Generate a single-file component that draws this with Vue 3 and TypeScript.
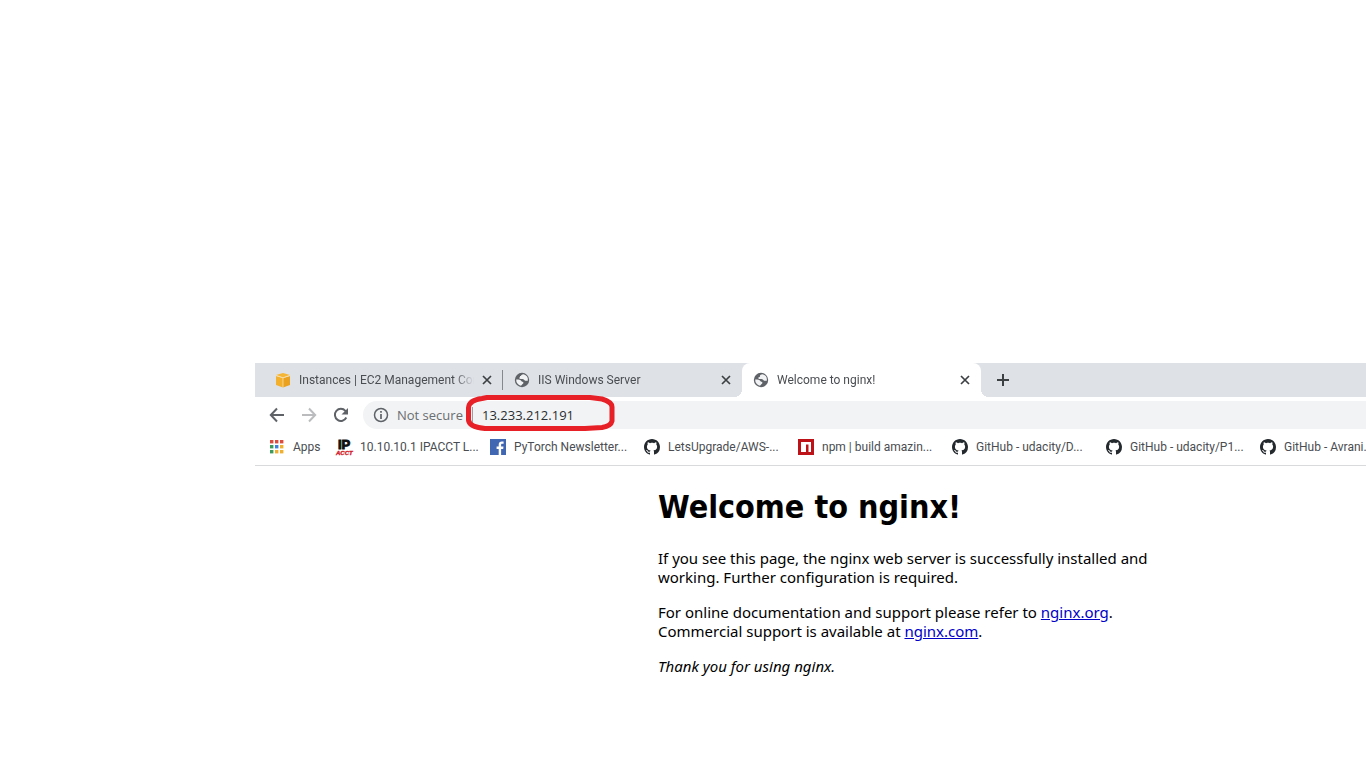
<script setup lang="ts">
import { ref } from 'vue'

interface Tab {
  title: string
  icon: 'aws' | 'globe'
}

interface Bookmark {
  title: string
  icon: 'ip' | 'facebook' | 'github' | 'npm'
}

const tabs: Tab[] = [
  { title: 'Instances | EC2 Management Console', icon: 'aws' },
  { title: 'IIS Windows Server', icon: 'globe' },
  { title: 'Welcome to nginx!', icon: 'globe' },
]
const active = ref(2)
const address = ref('13.233.212.191')

const bookmarks: Bookmark[] = [
  { title: '10.10.10.1 IPACCT L...', icon: 'ip' },
  { title: 'PyTorch Newsletter...', icon: 'facebook' },
  { title: 'LetsUpgrade/AWS-...', icon: 'github' },
  { title: 'npm | build amazin...', icon: 'npm' },
  { title: 'GitHub - udacity/D...', icon: 'github' },
  { title: 'GitHub - udacity/P1...', icon: 'github' },
  { title: 'GitHub - Avrani...', icon: 'github' },
]

const appColors = ['#dd4b3e', '#dd4b3e', '#dd4b3e', '#3d9a5b', '#3f7fd9', '#eeb02e', '#3d9a5b', '#eeb02e', '#eeb02e']
</script>

<template>
  <div class="desktop">
    <div class="browser">
      <div class="tabs">
        <div v-for="(tab, i) in tabs" :key="i" class="tab" :class="{ active: i === active, divided: i + 1 < active }">
          <button class="tab-name" type="button" @click="active = i">
            <svg v-if="tab.icon === 'aws'" class="icon" viewBox="0 0 16 16" aria-hidden="true">
              <path d="M1 4v9l7 2.500V6z" fill="#f2b02d" />
              <path d="M15 4v9l-7 2.500V6z" fill="#e9a11f" />
              <path d="M1 3l7-2 7 2-7 2.500z" fill="#f5b535" />
              <path d="M1 3.500l7 2.300 7-2.300M8 6v9.500" fill="none" stroke="#fbe0a5" stroke-width=".8" />
            </svg>
            <svg v-else class="icon" viewBox="0 0 16 16" aria-hidden="true">
              <circle cx="8" cy="8" r="7.200" fill="#5f6368" />
              <path class="land" d="M9.500 2.300c-1.500.2-2.800.9-2.500 2 .2.700-.9.600-1.500 1.200-.7.700.1 1.500 1.300 1.500 1.600 0 2.900-.1 3.500.9.500.9 1.600 1.200 3.500.8A5.800 5.800 0 0 0 9.500 2.300z" />
              <path class="land" d="M2.200 7.600c1.800-.1 4.600.3 5.100 1.400.4.9 1.800.5 2.100 1.400.4 1-.8 1.200-1.100 1.900-.3.700-.9 1-1.300 1.400A5.800 5.800 0 0 1 2.200 7.600z" />
            </svg>
            <span class="tab-title">{{ tab.title }}</span>
          </button>
          <button class="close" type="button" aria-label="Close tab">
            <svg viewBox="0 0 16 16" aria-hidden="true"><path d="M4 4l8 8M12 4l-8 8" stroke="#3c4043" stroke-width="1.700" /></svg>
          </button>
        </div>
        <button class="new-tab" type="button" aria-label="New tab">
          <svg viewBox="0 0 16 16" aria-hidden="true"><path d="M8 2v12M2 8h12" stroke="#3c4043" stroke-width="2" /></svg>
        </button>
      </div>

      <div class="toolbar">
        <button class="nav" type="button" aria-label="Back">
          <svg viewBox="0 0 16 16" aria-hidden="true"><path d="M15 8H2M8 1.500L1.800 8 8 14.500" fill="none" stroke="#5f6368" stroke-width="2" /></svg>
        </button>
        <button class="nav" type="button" aria-label="Forward">
          <svg viewBox="0 0 16 16" aria-hidden="true"><path d="M1 8h13M8 1.500L14.200 8 8 14.500" fill="none" stroke="#babcbe" stroke-width="2" /></svg>
        </button>
        <button class="nav" type="button" aria-label="Reload">
          <svg viewBox="0 0 16 16" aria-hidden="true">
            <path d="M13.300 10.500A6 6 0 1 1 12.400 3.900L14 5.500" fill="none" stroke="#5f6368" stroke-width="2" />
            <path d="M15 1v6.500H8.500z" fill="#5f6368" />
          </svg>
        </button>
        <div class="omnibox">
          <svg class="icon" viewBox="0 0 16 16" aria-hidden="true">
            <circle cx="8" cy="8" r="6.500" fill="none" stroke="#5f6368" stroke-width="1.500" />
            <path d="M8 7v5M8 4v1.700" stroke="#5f6368" stroke-width="1.700" />
          </svg>
          <label class="secure" for="address">Not secure</label>
          <div class="field">
            <input id="address" v-model="address" type="text" spellcheck="false" />
            <svg class="marker" viewBox="0 0 150 38" aria-hidden="true">
              <path d="M17 4.500L22 3.500H125L137 5Q147 8 147 13V27Q146 32 137 33.500L120 34.500H20Q4 33 3.500 26V14Q4 6 17 4.500z" fill="none" stroke="#e71f26" stroke-width="5" stroke-linejoin="round" />
            </svg>
          </div>
        </div>
      </div>

      <nav class="bookmarks" aria-label="Bookmarks">
        <a class="apps" href="#">
          <svg class="icon" viewBox="0 0 16 16" aria-hidden="true">
            <rect v-for="(c, i) in appColors" :key="i" :x="1 + (i % 3) * 5" :y="1 + Math.floor(i / 3) * 5" width="3.400" height="3.400" :fill="c" />
          </svg>
          <span>Apps</span>
        </a>
        <a v-for="(b, i) in bookmarks" :key="i" class="bookmark" href="#">
          <svg v-if="b.icon === 'ip'" class="icon ip-logo" viewBox="0 0 16 16" aria-hidden="true">
            <text class="ip" x="2" y="10">IP</text>
            <text class="acct" x="0" y="16">ACCT</text>
          </svg>
          <svg v-else-if="b.icon === 'facebook'" class="icon" viewBox="0 0 16 16" aria-hidden="true">
            <path d="M0 0h16v16H0z" fill="#4267b2" />
            <path d="M8.700 16v-6H6.600V7.600h2.100V5.700c0-2.100 1.300-3.200 3.100-3.200.9 0 1.500.1 1.800.1v2.200h-1.300c-1 0-1.200.5-1.200 1.200v1.600h2.400l-.3 2.400h-2.100v6z" fill="#fff" />
          </svg>
          <svg v-else-if="b.icon === 'npm'" class="icon" viewBox="0 0 16 16" aria-hidden="true">
            <path d="M0 0h16v16H0z" fill="#bd1218" />
            <path d="M3 3h10v10h-2.500V5.500H8V13H3z" fill="#fff" />
          </svg>
          <svg v-else class="icon" viewBox="0 0 16 16" aria-hidden="true">
            <path fill="#24292e" fill-rule="evenodd" d="M8 0C3.580 0 0 3.580 0 8c0 3.540 2.290 6.530 5.470 7.590.4.070.55-.17.55-.38 0-.19-.01-.82-.01-1.490-2.010.37-2.530-.49-2.690-.94-.09-.23-.48-.94-.82-1.130-.28-.15-.68-.52-.01-.53.63-.01 1.080.58 1.230.82.72 1.210 1.870.87 2.330.66.07-.52.28-.87.51-1.070-1.780-.2-3.640-.89-3.640-3.950 0-.87.31-1.590.82-2.150-.08-.2-.36-1.020.08-2.120 0 0 .67-.21 2.200.82.64-.18 1.320-.27 2-.27s1.360.09 2 .27c1.530-1.040 2.200-.82 2.200-.82.44 1.100.16 1.920.08 2.120.51.56.82 1.270.82 2.150 0 3.070-1.870 3.750-3.650 3.950.29.25.54.73.54 1.480 0 1.070-.01 1.930-.01 2.200 0 .21.15.46.55.38A8.010 8.010 0 0 0 16 8c0-4.420-3.580-8-8-8z" />
          </svg>
          <span>{{ b.title }}</span>
        </a>
      </nav>

      <main class="page">
        <h1>Welcome to nginx!</h1>
        <p>If you see this page, the nginx web server is successfully installed and<br />working. Further configuration is required.</p>
        <p>
          For online documentation and support please refer to <a href="#">nginx.org</a>.<br />
          Commercial support is available at <a href="#">nginx.com</a>.
        </p>
        <p><em>Thank you for using nginx.</em></p>
      </main>
    </div>
  </div>
</template>

<style>
body {
  margin: 0;
  background: #fff;
}
</style>

<style scoped>
.desktop {
  box-sizing: border-box;
  min-height: 100vh;
  padding: 363px 0 0 255px;
  overflow: hidden;
}
.browser {
  width: 100vw;
  font-family: Roboto, "Open Sans", sans-serif;
  font-size: 12px;
  color: #4a4d51;
}
button {
  padding: 0;
  border: 0;
  background: none;
  font: inherit;
  color: inherit;
}
svg {
  display: block;
}
.icon {
  flex: none;
  width: 16px;
  height: 16px;
}
.land {
  fill: #f1f2f4;
}
.tabs {
  display: flex;
  height: 34px;
  padding-left: 9px;
  background: #dee1e6;
}
.tab {
  position: relative;
  box-sizing: border-box;
  display: flex;
  align-items: center;
  width: 239px;
  padding: 0 8px 0 11px;
}
.tab.divided::after {
  content: "";
  position: absolute;
  right: 0;
  top: 7px;
  width: 1px;
  height: 20px;
  background: #85888c;
}
.tab.active {
  background: #fff;
  border-radius: 8px 8px 0 0;
}
.tab.active::before,
.tab.active::after {
  content: "";
  position: absolute;
  bottom: 0;
  width: 8px;
  height: 8px;
}
.tab.active::before {
  right: 100%;
  background: radial-gradient(circle at 0 0, transparent 8px, #fff 8px);
}
.tab.active::after {
  left: 100%;
  background: radial-gradient(circle at 100% 0, transparent 8px, #fff 8px);
}
.tab-name {
  flex: 1;
  min-width: 0;
  display: flex;
  align-items: center;
  gap: 8px;
  text-align: left;
}
.tab-title {
  flex: 1;
  overflow: hidden;
  white-space: nowrap;
  line-height: 18px;
  margin-right: 5px;
  mask-image: linear-gradient(to right, #000 calc(100% - 20px), transparent);
}
.close,
.close svg {
  width: 16px;
  height: 16px;
}
.close {
  flex: none;
}
.new-tab {
  margin-left: 14px;
}
.new-tab svg {
  width: 16px;
  height: 16px;
}
.toolbar {
  display: flex;
  align-items: center;
  gap: 16px;
  height: 36px;
  padding-left: 14px;
}
.nav svg {
  width: 16px;
  height: 16px;
}
.omnibox {
  flex: 1;
  display: flex;
  align-items: center;
  height: 28px;
  margin-left: -2px;
  padding-left: 10px;
  border-radius: 14px;
  background: #f1f3f4;
  font-family: "Open Sans", "Noto Sans", sans-serif;
  font-size: 13px;
  line-height: 20px;
}
.secure {
  margin-left: 8px;
  width: 75px;
  white-space: nowrap;
  color: #6a6d71;
}
.field {
  position: relative;
  flex: 1;
  display: flex;
  align-items: center;
}
.field::before {
  content: "";
  width: 1px;
  height: 16px;
  background: #9a9da1;
}
.field input {
  flex: 1;
  height: 20px;
  padding: 0 0 0 9px;
  border: 0;
  outline: 0;
  background: none;
  font: inherit;
  color: #2b2e31;
}
.marker {
  position: absolute;
  left: -7px;
  top: -11px;
  width: 150px;
  height: 38px;
}
.bookmarks {
  display: flex;
  align-items: center;
  height: 28px;
  padding: 0 0 4px 14px;
  border-bottom: 1px solid #d8dadc;
}
.bookmarks a {
  flex: none;
  display: flex;
  align-items: center;
  gap: 8px;
  white-space: nowrap;
  line-height: 18px;
  color: inherit;
  text-decoration: none;
}
.bookmarks .apps {
  width: 67px;
}
.bookmarks .bookmark {
  width: 154px;
}
.ip-logo {
  overflow: visible;
}
.ip {
  font: bold 13px "Liberation Sans", Arial, sans-serif;
  fill: #111;
  stroke: #111;
  stroke-width: 1px;
}
.acct {
  font: italic bold 6px "Liberation Sans", Arial, sans-serif;
  fill: #d3222a;
  stroke: #d3222a;
  stroke-width: 0.4px;
}
.page {
  width: 560px;
  margin: 0 auto;
  font-family: "Noto Sans", "Open Sans", sans-serif;
  font-size: 15px;
  line-height: 19px;
  color: #000;
}
h1 {
  margin: 22px 0;
  font-family: Tahoma, "DejaVu Sans Condensed", sans-serif;
  font-size: 32px;
  line-height: 39px;
}
p {
  margin: 16px 0;
  white-space: nowrap;
}
.page a {
  color: #0000c8;
}
</style>
